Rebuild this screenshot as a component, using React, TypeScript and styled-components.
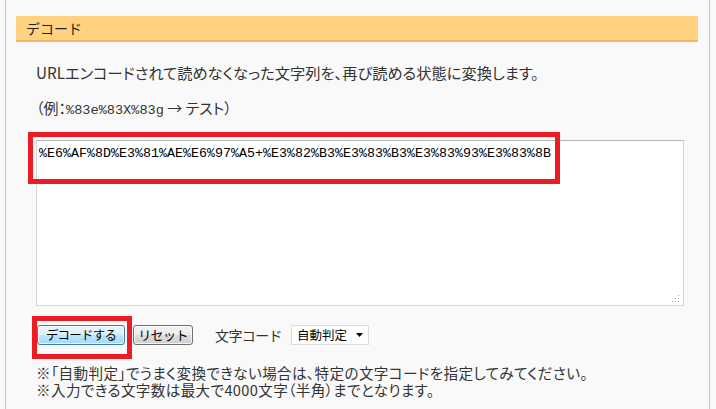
import React from "react";
import styled, { createGlobalStyle } from "styled-components";

const GlobalStyle = createGlobalStyle`
  html, body {
    margin: 0;
    padding: 0;
    background: #f9f9f9;
  }
  body {
    font-family: "Noto Sans CJK JP", "Noto Sans", sans-serif;
    color: #333;
  }
`;

const Page = styled.div`
  box-sizing: border-box;
  margin-left: 5px;
  width: 705px;
  height: 409px;
  overflow: hidden;
  border-left: 1px solid #c8c8c8;
  border-right: 1px solid #c8c8c8;
  background: #f9f9f9;
  padding: 16px 11px 0 10px;
`;

const SectionHeader = styled.h2`
  margin: 0;
  height: 24px;
  line-height: 24px;
  background: #fed27f;
  border-bottom: 2px solid #f7b46a;
  padding-left: 10px;
  font-size: 14px;
  font-weight: normal;
  color: #222;
`;

const Content = styled.div`
  padding-left: 20px;
`;

const Lead = styled.p`
  margin: 20px 0 0;
  font-size: 15.25px;
  line-height: 20px;
  font-feature-settings: "palt";
`;

const Example = styled.p`
  margin: 16px 0 0;
  font-size: 15px;
  line-height: 20px;
  font-feature-settings: "palt";
`;

const Code = styled.span`
  font-family: "Liberation Mono", monospace;
  font-size: 13.6px;
`;

const EditorWrap = styled.div`
  position: relative;
  margin-top: 19px;
  width: 648px;
`;

const Editor = styled.textarea`
  display: block;
  box-sizing: border-box;
  width: 648px;
  height: 166px;
  margin: 0;
  padding: 4px 2px;
  border: 1px solid #d6d6d6;
  border-top-color: #b4b4b4;
  background: #fff;
  font-family: "Liberation Mono", monospace;
  font-size: 13.33px;
  line-height: 17px;
  color: #000;
  resize: none;
  outline: none;
`;

const Grip = styled.svg`
  position: absolute;
  right: 4px;
  bottom: 3px;
  width: 8px;
  height: 8px;
  pointer-events: none;
`;

const Highlight = styled.div<{ $top: number; $left: number; $w: number; $h: number }>`
  position: absolute;
  top: ${(p) => p.$top}px;
  left: ${(p) => p.$left}px;
  width: ${(p) => p.$w}px;
  height: ${(p) => p.$h}px;
  box-sizing: border-box;
  border: 5px solid #ec1c24;
  pointer-events: none;
`;

const Controls = styled.div`
  display: flex;
  align-items: center;
  margin-top: 18px;
  height: 21px;
  padding-left: 1px;
`;

const ButtonHolder = styled.span`
  position: relative;
  display: inline-flex;
`;

const Button = styled.button<{ $primary?: boolean }>`
  box-sizing: border-box;
  height: 20px;
  margin: 0;
  padding: 0;
  border-radius: 3px;
  font-family: "Noto Sans CJK JP", sans-serif;
  font-size: 12.5px;
  line-height: 18px;
  white-space: nowrap;
  color: #000;
  cursor: pointer;
  border: 1px solid ${(p) => (p.$primary ? "#3c7fb1" : "#707070")};
  background: ${(p) =>
    p.$primary
      ? "linear-gradient(#eaf6fd 0%, #d9f0fc 50%, #bee6fd 50%, #a7d9f5 100%)"
      : "linear-gradient(#f2f2f2 0%, #ebebeb 50%, #dddddd 50%, #cfcfcf 100%)"};
  box-shadow: inset 0 0 0 1px rgba(255, 255, 255, 0.7);
`;

const DecodeButton = styled(Button)`
  width: 88px;
  letter-spacing: -0.8px;
`;

const ResetButton = styled(Button)`
  width: 60px;
  margin-left: 8px;
  font-size: 13px;
  letter-spacing: -0.6px;
`;

const Label = styled.span`
  margin-left: 22px;
  font-size: 14px;
  letter-spacing: -0.6px;
  line-height: 20px;
  color: #333;
`;

const FakeSelect = styled.div`
  box-sizing: border-box;
  display: flex;
  align-items: center;
  justify-content: space-between;
  width: 78px;
  height: 20px;
  margin-left: 9px;
  padding: 0 5px 0 5px;
  background: #fff;
  border: 1px solid #dcdcdc;
  font-size: 12.5px;
  color: #000;
`;

const Notes = styled.div`
  margin-top: 19px;
  font-size: 14.6px;
  letter-spacing: 0.35px;
  line-height: 17px;
  font-feature-settings: "palt";
`;

const NoteLine = styled.div`
  white-space: nowrap;
  height: 17px;
`;

export default function App() {
  return (
    <>
      <GlobalStyle />
      <Page>
        <SectionHeader>デコード</SectionHeader>
        <Content>
          <Lead>URLエンコードされて読めなくなった文字列を、再び読める状態に変換します。</Lead>
          <Example>
            （例：<Code>%83e%83X%83g</Code> → テスト）
          </Example>
          <EditorWrap>
            <Editor
              defaultValue="%E6%AF%8D%E3%81%AE%E6%97%A5+%E3%82%B3%E3%83%B3%E3%83%93%E3%83%8B"
              spellCheck={false}
            />
            <Grip viewBox="0 0 8 8">
              <rect x="6" y="0" width="1" height="1" fill="#a0a0a0" />
              <rect x="3" y="3" width="1" height="1" fill="#a0a0a0" />
              <rect x="6" y="3" width="1" height="1" fill="#a0a0a0" />
              <rect x="0" y="6" width="1" height="1" fill="#a0a0a0" />
              <rect x="3" y="6" width="1" height="1" fill="#a0a0a0" />
              <rect x="6" y="6" width="1" height="1" fill="#a0a0a0" />
            </Grip>
            <Highlight $top={-8} $left={-8} $w={532} $h={52} />
          </EditorWrap>
          <Controls>
            <ButtonHolder>
              <DecodeButton $primary>デコードする</DecodeButton>
              <Highlight $top={-9} $left={-5} $w={100} $h={43} />
            </ButtonHolder>
            <ResetButton>リセット</ResetButton>
            <Label>文字コード</Label>
            <FakeSelect role="combobox">
              <span>自動判定</span>
              <svg width="7" height="4" viewBox="0 0 7 4">
                <path d="M0 0 H7 L3.5 4 Z" fill="#000" />
              </svg>
            </FakeSelect>
          </Controls>
          <Notes>
            <NoteLine>※「自動判定」でうまく変換できない場合は、特定の文字コードを指定してみてください。</NoteLine>
            <NoteLine>※入力できる文字数は最大で4000文字（半角）までとなります。</NoteLine>
          </Notes>
        </Content>
      </Page>
    </>
  );
}
